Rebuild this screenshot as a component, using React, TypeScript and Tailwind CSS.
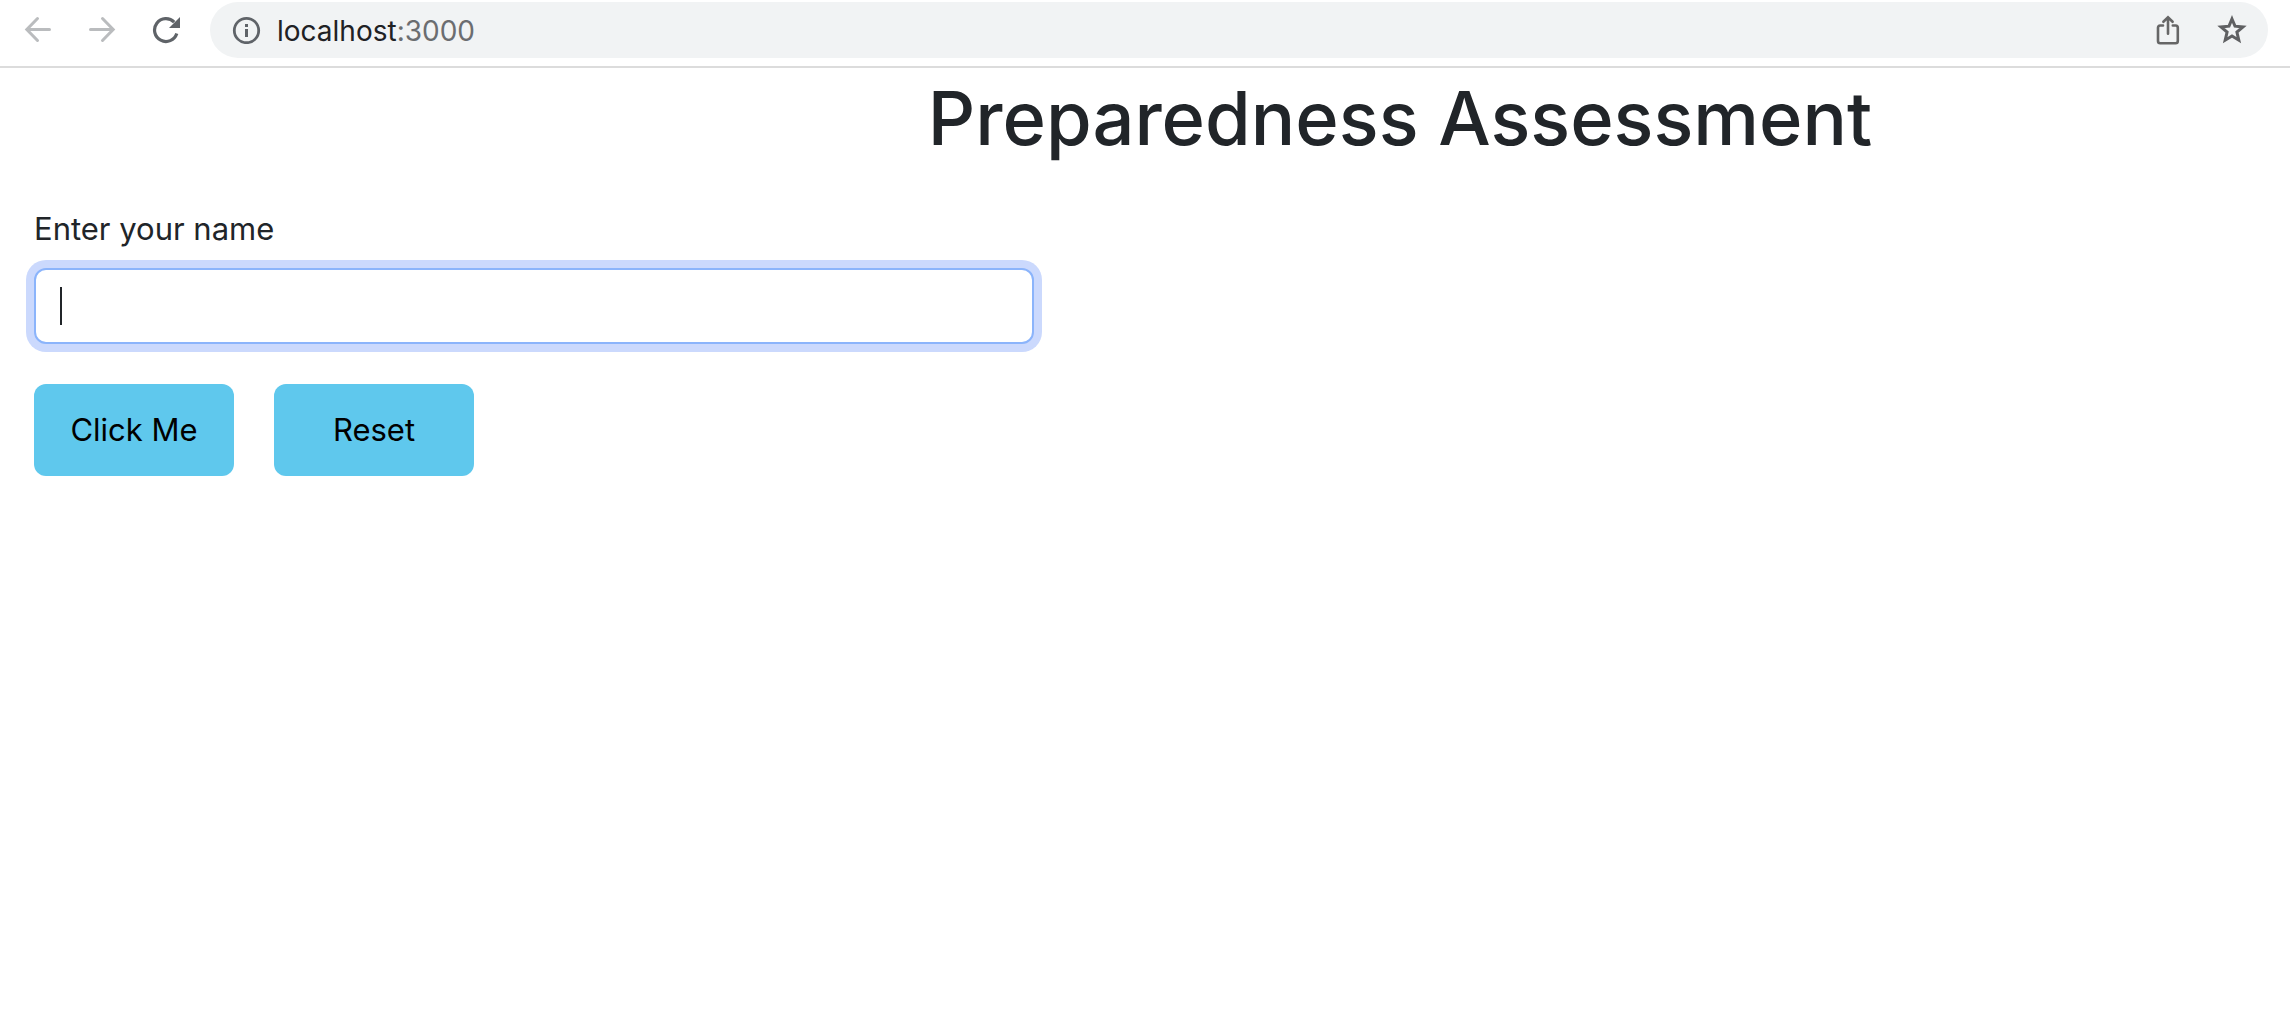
import { useState } from "react";

function BrowserBar() {
  return (
    <header className="flex h-[68px] items-start border-b-2 border-[#dcdcdc] bg-white pr-[22px] pt-[2px]">
      <nav className="flex h-14 w-[210px] shrink-0 items-center gap-9 pl-6" aria-label="Browser navigation">
        <button type="button" aria-label="Back" className="text-[#babcbe]">
          <svg width="28" height="28" viewBox="0 0 28 28" fill="none" stroke="currentColor" strokeWidth="3" strokeLinecap="round">
            <path d="M25.5 13.5H3.5M13.5 2.5L2.8 13.5L13.5 24.5" />
          </svg>
        </button>
        <button type="button" aria-label="Forward" className="text-[#babcbe]">
          <svg width="28" height="28" viewBox="0 0 28 28" fill="none" stroke="currentColor" strokeWidth="3" strokeLinecap="round">
            <path d="M2.5 13.5H24.5M14.5 2.5L25.2 13.5L14.5 24.5" />
          </svg>
        </button>
        <button type="button" aria-label="Reload" className="text-[#5f6368]">
          <svg width="28" height="28" viewBox="0 0 28 28" fill="none">
            <path d="M22.2 6.2A11.4 11.4 0 1 0 24.8 17.6" stroke="currentColor" strokeWidth="3.2" />
            <path d="M28 1V12H17Z" fill="currentColor" />
          </svg>
        </button>
      </nav>
      <div className="flex h-14 flex-1 items-center rounded-full bg-[#f1f3f4] px-[21px]">
        <button type="button" aria-label="Site information" className="mr-4 text-[#5f6368]">
          <svg width="30" height="28" viewBox="0 0 30 28" fill="none">
            <circle cx="15.5" cy="14.5" r="12.2" stroke="currentColor" strokeWidth="2.8" />
            <path d="M14 8H17V11H14ZM14 13H17V21H14Z" fill="currentColor" />
          </svg>
        </button>
        <p className="flex-1 pt-[2px] text-[28px] leading-9 text-[#6b6d70]">
          <span className="text-[#202124]">localhost</span>:3000
        </p>
        <div className="flex items-center gap-9">
          <button type="button" aria-label="Share" className="text-[#666666]">
            <svg width="28" height="30" viewBox="0 0 28 30" fill="none" stroke="currentColor" strokeWidth="2.6" strokeLinecap="round">
              <path d="M10 10.5H7.2Q5 10.5 5 12.8V26Q5 28.3 7.2 28.3H22.6Q24.8 28.3 24.8 26V12.8Q24.8 10.5 22.6 10.5H19.8" />
              <path d="M15 18.8V3M10.4 6.8L15 2.3L19.6 6.8" />
            </svg>
          </button>
          <button type="button" aria-label="Bookmark this page" className="text-[#5f6062]">
            <svg width="30" height="30" viewBox="0 0 30 30" fill="none" stroke="currentColor" strokeWidth="3">
              <path d="M15 4L18 11.2L26 11.9L19.9 17.1L21.8 25.2L15 21L8.2 25.2L10.1 17.1L4 11.9L12 11.2Z" />
            </svg>
          </button>
        </div>
      </div>
    </header>
  );
}

export default function App() {
  const [name, setName] = useState("");

  return (
    <div className="min-h-screen bg-white font-['Inter',sans-serif] text-[#212529]">
      <BrowserBar />
      <main>
        <h1 className="ml-[510px] pt-[2px] text-center text-[74px] font-medium leading-24 whitespace-nowrap">
          Preparedness Assessment
        </h1>
        <form className="flex flex-col items-start pl-[34px] pt-10" onSubmit={(e) => e.preventDefault()}>
          <label htmlFor="name" className="text-[31px] leading-[46px]">
            Enter your name
          </label>
          <div className="relative mt-4 w-full max-w-[1000px]">
            <input
              id="name"
              type="text"
              autoComplete="off"
              value={name}
              onChange={(e) => setName(e.target.value)}
              className="peer block h-[76px] w-full rounded-xl border-2 border-[#8bb4fb] bg-white px-6 text-[31px] ring-8 ring-[#cbd9fd] outline-none"
            />
            {name === "" && (
              <span
                aria-hidden="true"
                className="pointer-events-none absolute left-[26px] top-[19px] h-[38px] w-[2px] bg-[#212529] peer-focus:hidden"
              />
            )}
          </div>
          <div className="mt-10 flex gap-10">
            <button type="submit" className="h-[92px] w-[200px] rounded-xl bg-[#5fc8ed] text-[31px] text-black">
              Click Me
            </button>
            <button
              type="button"
              onClick={() => setName("")}
              className="h-[92px] w-[200px] rounded-xl bg-[#5fc8ed] text-[31px] text-black"
            >
              Reset
            </button>
          </div>
        </form>
      </main>
    </div>
  );
}
